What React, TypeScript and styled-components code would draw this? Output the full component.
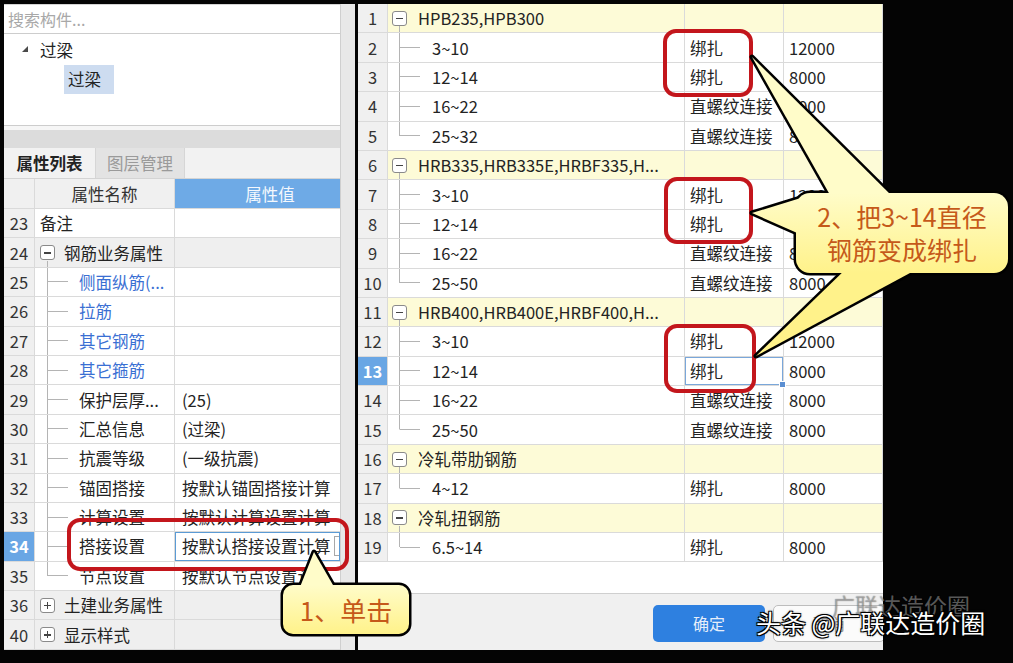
import React from 'react';
import styled, { createGlobalStyle, css } from 'styled-components';

const GlobalStyle = createGlobalStyle`
  html, body {
    margin: 0;
    padding: 0;
    background: #000;
  }
  body {
    font-family: "Noto Sans CJK SC", "Microsoft YaHei", sans-serif;
  }
`;

const LINE = '#dadada';
const TREE_LINE = '#b4b4b4';

type PropRow = {
  n: number;
  name: string;
  value?: string;
  kind: 'plain' | 'group' | 'child';
  open?: boolean;
  link?: boolean;
  last?: boolean;
  editing?: boolean;
};

const propRows: PropRow[] = [
  { n: 23, name: '备注', kind: 'plain' },
  { n: 24, name: '钢筋业务属性', kind: 'group', open: true },
  { n: 25, name: '侧面纵筋(...', kind: 'child', link: true },
  { n: 26, name: '拉筋', kind: 'child', link: true },
  { n: 27, name: '其它钢筋', kind: 'child', link: true },
  { n: 28, name: '其它箍筋', kind: 'child', link: true },
  { n: 29, name: '保护层厚...', value: '(25)', kind: 'child' },
  { n: 30, name: '汇总信息', value: '(过梁)', kind: 'child' },
  { n: 31, name: '抗震等级', value: '(一级抗震)', kind: 'child' },
  { n: 32, name: '锚固搭接', value: '按默认锚固搭接计算', kind: 'child' },
  { n: 33, name: '计算设置', value: '按默认计算设置计算', kind: 'child' },
  { n: 34, name: '搭接设置', value: '按默认搭接设置计算', kind: 'child', editing: true },
  { n: 35, name: '节点设置', value: '按默认节点设置计算', kind: 'child', last: true },
  { n: 36, name: '土建业务属性', kind: 'group' },
  { n: 40, name: '显示样式', kind: 'group' },
];

type Item = [string, string, string];
type Group = { n: number; name: string; items: Item[] };

const steelGroups: Group[] = [
  {
    n: 1,
    name: 'HPB235,HPB300',
    items: [
      ['3~10', '绑扎', '12000'],
      ['12~14', '绑扎', '8000'],
      ['16~22', '直螺纹连接', '8000'],
      ['25~32', '直螺纹连接', '8000'],
    ],
  },
  {
    n: 6,
    name: 'HRB335,HRB335E,HRBF335,H...',
    items: [
      ['3~10', '绑扎', '12000'],
      ['12~14', '绑扎', '8000'],
      ['16~22', '直螺纹连接', '8000'],
      ['25~50', '直螺纹连接', '8000'],
    ],
  },
  {
    n: 11,
    name: 'HRB400,HRB400E,HRBF400,H...',
    items: [
      ['3~10', '绑扎', '12000'],
      ['12~14', '绑扎', '8000'],
      ['16~22', '直螺纹连接', '8000'],
      ['25~50', '直螺纹连接', '8000'],
    ],
  },
  { n: 16, name: '冷轧带肋钢筋', items: [['4~12', '绑扎', '8000']] },
  { n: 18, name: '冷轧扭钢筋', items: [['6.5~14', '绑扎', '8000']] },
];

const ACTIVE_STEEL_ROW = 13;

const Screen = styled.div`
  position: relative;
  width: 1013px;
  height: 663px;
  box-sizing: border-box;
  padding: 4px 0 0 4px;
  background: #040404;
  display: flex;
  align-items: flex-start;
  overflow: hidden;
  color: #232323;
  font-size: 16.5px;
`;

/* ---------- left: component tree + property list ---------- */

const LeftPanel = styled.div`
  width: 336px;
  height: 646px;
  background: #fff;
  display: flex;
  flex-direction: column;
  overflow: hidden;
`;

const SearchBox = styled.div`
  height: 30px;
  box-sizing: border-box;
  border-top: 1px solid #d4d4d4;
  border-bottom: 1px solid #cdcdcd;
  padding-left: 4px;
  display: flex;
  align-items: center;
  color: #a8a8a8;
  font-size: 16px;
`;

const TreeArea = styled.div`
  height: 92px;
  box-sizing: border-box;
  padding-top: 2px;
  border-bottom: 1px solid #cdcdcd;
`;

const TreeNode = styled.div<{ $indent: number }>`
  height: 29px;
  display: flex;
  align-items: center;
  gap: 12px;
  padding-left: ${(p) => p.$indent}px;
  font-size: 16.5px;
`;

const Caret = styled.span`
  width: 0;
  height: 0;
  border-left: 6px solid transparent;
  border-bottom: 6px solid #4a4a4a;
  margin-top: -3px;
`;

const NodeLabel = styled.span<{ $selected?: boolean }>`
  height: 29px;
  line-height: 29px;
  ${(p) =>
    p.$selected &&
    css`
      padding: 0 13px 0 4px;
      background: #cddcf0;
    `}
`;

const Splitter = styled.div`
  height: 22px;
  box-sizing: border-box;
  border-top: 4px solid #f6f6f6;
  background: #dcdcdc;
`;

const TabBar = styled.div`
  height: 30px;
  display: flex;
  background: #f2f2f2;
`;

const Tab = styled.div<{ $active?: boolean; $width: number }>`
  width: ${(p) => p.$width}px;
  display: flex;
  align-items: center;
  justify-content: center;
  box-sizing: border-box;
  font-size: 16.5px;
  ${(p) =>
    p.$active
      ? css`
          color: #222;
          font-weight: 600;
        `
      : css`
          color: #9a9a9a;
          background: #e3e3e3;
          border-left: 1px solid #d6d6d6;
          border-right: 1px solid #d6d6d6;
        `}
`;

const PropGrid = styled.div`
  display: grid;
  grid-template-columns: 31px 140px 165px;
  grid-auto-rows: 29.4px;
`;

const PropHeadRow = styled(PropGrid)`
  grid-auto-rows: 30px;
  border-top: 1px solid #d4d4d4;
`;

const Cell = styled.div`
  display: flex;
  align-items: center;
  box-sizing: border-box;
  border-right: 1px solid ${LINE};
  border-bottom: 1px solid ${LINE};
  white-space: nowrap;
  overflow: hidden;
`;

const RowNum = styled(Cell)<{ $active?: boolean }>`
  justify-content: center;
  background: ${(p) => (p.$active ? '#69a6e4' : '#f0f0f0')};
  color: ${(p) => (p.$active ? '#fff' : '#333')};
  font-weight: ${(p) => (p.$active ? 700 : 400)};
`;

const HeadCell = styled(Cell)<{ $accent?: boolean }>`
  justify-content: center;
  ${(p) =>
    p.$accent
      ? css`
          background: #6eaae6;
          color: #f4f8fd;
          padding-left: 25px;
          border-right: none;
        `
      : css`
          background: #f0f0f0;
          color: #333;
        `}
`;

/* tree guide lines are painted as background strokes inside a cell */
const treeGuides = (x: number, kind: 'group' | 'child' | 'plain', last?: boolean, open?: boolean) => {
  const stroke = `linear-gradient(${TREE_LINE}, ${TREE_LINE})`;
  if (kind === 'child') {
    return css`
      background-image: ${stroke}, ${stroke};
      background-repeat: no-repeat;
      background-position: ${x}px 0, ${x + 1}px 50%;
      background-size: 1px ${last ? '50%' : '100%'}, 20px 1px;
    `;
  }
  if (kind === 'group' && open) {
    return css`
      background-image: ${stroke};
      background-repeat: no-repeat;
      background-position: ${x}px 100%;
      background-size: 1px 6px;
    `;
  }
  return css``;
};

const NameCell = styled(Cell)<{ $kind: PropRow['kind']; $link?: boolean; $last?: boolean; $open?: boolean; $shade?: boolean }>`
  padding-left: ${(p) => (p.$kind === 'child' ? 44 : p.$kind === 'group' ? 5 : 5)}px;
  gap: 9px;
  color: ${(p) => (p.$link ? '#3a6fd3' : '#232323')};
  background-color: ${(p) => (p.$shade ? '#efefef' : '#fff')};
  ${(p) => treeGuides(12, p.$kind, p.$last, p.$open)}
`;

const ValueCell = styled(Cell)<{ $editing?: boolean; $shade?: boolean }>`
  padding-left: 7px;
  background: ${(p) => (p.$shade ? '#efefef' : '#fff')};
  border-right: none;
  ${(p) =>
    p.$editing &&
    css`
      box-shadow: inset 0 0 0 1px #5b9bd5;
    `}
`;

const EllipsisStub = styled.span`
  margin-left: auto;
  width: 4px;
  height: 18px;
  border: 1px solid #a8a8a8;
  border-right: none;
  margin-right: 1px;
`;

const Expander = styled.span<{ $open?: boolean }>`
  position: relative;
  flex: none;
  width: 15px;
  height: 15px;
  box-sizing: border-box;
  border: 1px solid #8a8a8a;
  border-radius: 3px;
  background: #fff;
  &::before {
    content: '';
    position: absolute;
    left: 3px;
    top: 6px;
    width: 7px;
    height: 1.5px;
    background: #444;
  }
  ${(p) =>
    !p.$open &&
    css`
      &::after {
        content: '';
        position: absolute;
        left: 5.8px;
        top: 3px;
        width: 1.5px;
        height: 7px;
        background: #444;
      }
    `}
`;

const SideStrip = styled.div`
  width: 15px;
  height: 646px;
  box-sizing: border-box;
  background: #e8e8e8;
  border-left: 1px solid #cfcfcf;
`;

/* ---------- right: splice settings table ---------- */

const RightPanel = styled.div`
  margin-left: 3px;
  width: 525px;
  height: 646px;
  background: #fff;
  display: flex;
  flex-direction: column;
  overflow: hidden;
`;

const SteelGrid = styled.div`
  display: grid;
  grid-template-columns: 30px 297px 99px 99px;
  grid-auto-rows: 29.4px;
`;

const SteelTree = styled(Cell)<{ $group?: boolean; $last?: boolean }>`
  padding-left: ${(p) => (p.$group ? 4 : 44)}px;
  gap: 11px;
  background-color: ${(p) => (p.$group ? '#fdfbd7' : '#fff')};
  ${(p) => treeGuides(11, p.$group ? 'group' : 'child', p.$last, true)}
`;

const SteelCell = styled(Cell)<{ $group?: boolean; $active?: boolean }>`
  position: relative;
  overflow: visible;
  padding-left: 5px;
  background: ${(p) => (p.$group ? '#fdfbd7' : '#fff')};
  ${(p) =>
    p.$active &&
    css`
      box-shadow: inset 0 0 0 1px #7aa7da;
      &::after {
        content: '';
        position: absolute;
        right: -3px;
        bottom: -3px;
        width: 5px;
        height: 5px;
        background: #5b8fd2;
        border: 1px solid #fff;
        z-index: 1;
      }
    `}
`;

const Filler = styled.div`
  flex: 1;
  background: #fff;
`;

const ButtonBar = styled.div`
  height: 57px;
  box-sizing: border-box;
  border-top: 1px solid #cfcfcf;
  background: #f0f0f0;
  display: flex;
  align-items: center;
  gap: 8px;
  padding: 2px 0 0 295px;
`;

const Button = styled.div<{ $primary?: boolean }>`
  flex: none;
  width: 112px;
  height: 37px;
  box-sizing: border-box;
  border-radius: 5px;
  display: flex;
  align-items: center;
  justify-content: center;
  font-size: 16px;
  ${(p) =>
    p.$primary
      ? css`
          background: #2e80e0;
          color: #e6eefa;
        `
      : css`
          background: #fbfbfb;
          border: 1px solid #bdbdbd;
          color: #9a9a9a;
        `}
`;

/* ---------- annotations ---------- */

const Overlay = styled.svg`
  position: absolute;
  left: 0;
  top: 0;
  width: 1013px;
  height: 663px;
  pointer-events: none;
`;

const CalloutText = styled.div<{ $x: number; $y: number; $w: number; $h: number; $size: number }>`
  position: absolute;
  left: ${(p) => p.$x}px;
  top: ${(p) => p.$y}px;
  width: ${(p) => p.$w}px;
  height: ${(p) => p.$h}px;
  display: flex;
  flex-direction: column;
  align-items: center;
  justify-content: center;
  color: #c5591a;
  font-size: ${(p) => p.$size}px;
  line-height: 33px;
  white-space: nowrap;
`;

const Watermark = styled.div`
  position: absolute;
  left: 756px;
  top: 604px;
  font-size: 25px;
  line-height: 36px;
  color: #fff;
  white-space: nowrap;
  text-shadow: 1px 1px 0 #000, -1px -1px 0 #000, 1px -1px 0 #000, -1px 1px 0 #000, 0 0 3px #000;
`;

const GhostMark = styled.div`
  position: absolute;
  left: 832px;
  top: 588px;
  font-size: 23px;
  color: rgba(255, 255, 255, 0.35);
  white-space: nowrap;
  text-shadow: 0 0 1px rgba(0, 0, 0, 0.6);
`;

type Shape = { kind: 'rect'; x: number; y: number; w: number; h: number; r: number } | { kind: 'poly'; pts: string };

const callouts: { id: string; y1: number; y2: number; shapes: Shape[] }[] = [
  {
    id: 'c1',
    y1: 585,
    y2: 634,
    shapes: [
      { kind: 'poly', pts: '298,592 314,552 337,592' },
      { kind: 'rect', x: 283, y: 585, w: 126, h: 49, r: 10 },
    ],
  },
  {
    id: 'c2',
    y1: 193,
    y2: 273,
    shapes: [
      { kind: 'poly', pts: '834,202 752,57 898,202' },
      { kind: 'poly', pts: '804,197 752,213 804,236' },
      { kind: 'poly', pts: '849,266 756,356 923,266' },
      { kind: 'rect', x: 796, y: 193, w: 212, h: 80, r: 14 },
    ],
  },
];

const marks = [
  { x: 69, y: 520, w: 278, h: 49 },
  { x: 665, y: 31, w: 86, h: 64 },
  { x: 666, y: 179, w: 85, h: 63 },
  { x: 666, y: 326, w: 88, h: 65 },
];

function renderShape(s: Shape, key: string, props: React.SVGProps<SVGElement>) {
  if (s.kind === 'rect') {
    return <rect key={key} x={s.x} y={s.y} width={s.w} height={s.h} rx={s.r} {...(props as React.SVGProps<SVGRectElement>)} />;
  }
  return <polygon key={key} points={s.pts} {...(props as React.SVGProps<SVGPolygonElement>)} />;
}

function Annotations() {
  return (
    <Overlay viewBox="0 0 1013 663">
      <defs>
        {callouts.map((c) => (
          <linearGradient key={c.id} id={`fill-${c.id}`} gradientUnits="userSpaceOnUse" x1="0" y1={c.y1} x2="0" y2={c.y2}>
            <stop offset="0" stopColor="#fffcc9" />
            <stop offset="1" stopColor="#fff28a" />
          </linearGradient>
        ))}
      </defs>
      {marks.map((m, i) => (
        <rect key={i} x={m.x} y={m.y} width={m.w} height={m.h} rx={11} fill="none" stroke="#c3161c" strokeWidth={4} />
      ))}
      {callouts.map((c) => (
        <g key={c.id}>
          {c.shapes.map((s, i) => renderShape(s, `s${i}`, { fill: '#000', stroke: '#000', strokeWidth: 5, strokeLinejoin: 'round' }))}
          {c.shapes.map((s, i) => renderShape(s, `f${i}`, { fill: `url(#fill-${c.id})` }))}
        </g>
      ))}
    </Overlay>
  );
}

function PropertyList() {
  return (
    <>
      <PropHeadRow>
        <HeadCell />
        <HeadCell>属性名称</HeadCell>
        <HeadCell $accent>属性值</HeadCell>
      </PropHeadRow>
      <PropGrid>
        {propRows.map((r) => {
          const shade = r.kind === 'group';
          return (
            <React.Fragment key={r.n}>
              <RowNum $active={r.editing}>{r.n}</RowNum>
              <NameCell $kind={r.kind} $link={r.link} $last={r.last} $open={r.open} $shade={shade}>
                {r.kind === 'group' && <Expander $open={r.open} />}
                {r.name}
              </NameCell>
              <ValueCell $editing={r.editing} $shade={shade}>
                {r.value}
                {r.editing && <EllipsisStub />}
              </ValueCell>
            </React.Fragment>
          );
        })}
      </PropGrid>
    </>
  );
}

function SteelTable() {
  return (
    <SteelGrid>
      {steelGroups.map((g) => (
        <React.Fragment key={g.n}>
          <RowNum>{g.n}</RowNum>
          <SteelTree $group>
            <Expander $open />
            {g.name}
          </SteelTree>
          <SteelCell $group />
          <SteelCell $group />
          {g.items.map(([range, method, length], i) => {
            const n = g.n + i + 1;
            return (
              <React.Fragment key={n}>
                <RowNum $active={n === ACTIVE_STEEL_ROW}>{n}</RowNum>
                <SteelTree $last={i === g.items.length - 1}>{range}</SteelTree>
                <SteelCell $active={n === ACTIVE_STEEL_ROW}>{method}</SteelCell>
                <SteelCell>{length}</SteelCell>
              </React.Fragment>
            );
          })}
        </React.Fragment>
      ))}
    </SteelGrid>
  );
}

export default function App() {
  return (
    <>
      <GlobalStyle />
      <Screen>
        <LeftPanel>
          <SearchBox>搜索构件...</SearchBox>
          <TreeArea>
            <TreeNode $indent={18}>
              <Caret />
              <NodeLabel>过梁</NodeLabel>
            </TreeNode>
            <TreeNode $indent={60}>
              <NodeLabel $selected>过梁</NodeLabel>
            </TreeNode>
          </TreeArea>
          <Splitter />
          <TabBar>
            <Tab $active $width={91}>
              属性列表
            </Tab>
            <Tab $width={90}>图层管理</Tab>
          </TabBar>
          <PropertyList />
        </LeftPanel>
        <SideStrip />
        <RightPanel>
          <SteelTable />
          <Filler />
          <ButtonBar>
            <Button $primary>确定</Button>
            <Button>取消</Button>
          </ButtonBar>
        </RightPanel>

        <Annotations />
        <CalloutText $x={283} $y={585} $w={126} $h={49} $size={26}>
          1、单击
        </CalloutText>
        <CalloutText $x={796} $y={193} $w={212} $h={80} $size={25}>
          <span>2、把3~14直径</span>
          <span>钢筋变成绑扎</span>
        </CalloutText>
        <GhostMark>广联达造价圈</GhostMark>
        <Watermark>头条 @广联达造价圈</Watermark>
      </Screen>
    </>
  );
}
